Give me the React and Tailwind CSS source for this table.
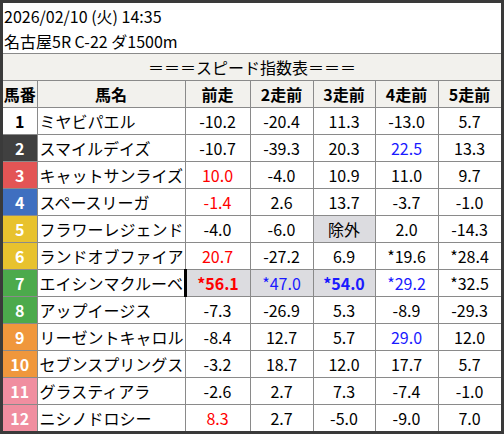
import React from 'react';

const FRAME = {
  1: 'bg-white text-black',
  2: 'bg-[#404040] text-white',
  3: 'bg-[#e35555] text-white',
  4: 'bg-[#3f6fc0] text-white',
  5: 'bg-[#e8c22e] text-white',
  6: 'bg-[#e8c22e] text-white',
  7: 'bg-[#4caa4c] text-white',
  8: 'bg-[#4caa4c] text-white',
  9: 'bg-[#f0973c] text-white',
  10: 'bg-[#f0973c] text-white',
  11: 'bg-[#f08ea0] text-white',
  12: 'bg-[#f08ea0] text-white',
};

// value cells: [text, style] where style: r = red, b = blue, B = bold, g = gray bg, k = black left bar
const ROWS = [
  ['ミヤビパエル', ['-10.2'], ['-20.4'], ['11.3'], ['-13.0'], ['5.7']],
  ['スマイルデイズ', ['-10.7'], ['-39.3'], ['20.3'], ['22.5', 'b'], ['13.3']],
  ['キャットサンライズ', ['10.0', 'r'], ['-4.0'], ['10.9'], ['11.0'], ['9.7']],
  ['スペースリーガ', ['-1.4', 'r'], ['2.6'], ['13.7'], ['-3.7'], ['-1.0']],
  ['フラワーレジェンド', ['-4.0'], ['-6.0'], ['除外', 'g'], ['2.0'], ['-14.3']],
  ['ランドオブファイア', ['20.7', 'r'], ['-27.2'], ['6.9'], ['*19.6'], ['*28.4']],
  ['エイシンマクルーベ', ['*56.1', 'rBgk'], ['*47.0', 'bg'], ['*54.0', 'bBg'], ['*29.2', 'b'], ['*32.5']],
  ['アップイージス', ['-7.3'], ['-26.9'], ['5.3'], ['-8.9'], ['-29.3']],
  ['リーゼントキャロル', ['-8.4'], ['12.7'], ['5.7'], ['29.0', 'b'], ['12.0']],
  ['セブンスプリングス', ['-3.2'], ['18.7'], ['12.0'], ['17.7'], ['5.7']],
  ['グラスティアラ', ['-2.6'], ['2.7'], ['7.3'], ['-7.4'], ['-1.0']],
  ['ニシノドロシー', ['8.3', 'r'], ['2.7'], ['-5.0'], ['-9.0'], ['7.0']],
];

const HEAD = ['前走', '2走前', '3走前', '4走前', '5走前'];

function cellClass(s = '') {
  let c = 'border border-[#8a8a8a] text-center p-0 ';
  if (s.includes('r')) c += 'text-[#ff0000] ';
  else if (s.includes('b')) c += 'text-[#1a1aff] ';
  else c += 'text-black ';
  if (s.includes('B')) c += 'font-bold ';
  if (s.includes('g')) c += 'bg-[#dcdce0] ';
  if (s.includes('k')) c += 'border-l-[3px] border-l-black ';
  return c;
}

export default function App() {
  return (
    <div
      className="w-[504px] h-[434px] border-[3px] border-[#3a3a3a] bg-white overflow-hidden"
      style={{ fontFamily: '"Noto Sans CJK JP", "Noto Sans", sans-serif' }}
    >
      <div className="h-[50px] px-[1px] pt-[1px] text-[16px] leading-[25px] text-black">
        <div>2026/02/10 (火) 14:35</div>
        <div>名古屋5R C-22 ダ1500m</div>
      </div>
      <table className="w-[498px] border-collapse table-fixed text-[16px] leading-[20px]">
        <colgroup>
          <col className="w-[34px]" />
          <col className="w-[148px]" />
          <col className="w-[65px]" />
          <col className="w-[63px]" />
          <col className="w-[62px]" />
          <col className="w-[63px]" />
          <col className="w-[63px]" />
        </colgroup>
        <tbody>
          <tr className="h-[27px] bg-[#f2f1ed]">
            <td colSpan={7} className="border-y border-[#8a8a8a] text-center p-0">
              ＝＝＝スピード指数表＝＝＝
            </td>
          </tr>
          <tr className="h-[27px] bg-[#f2f1ed] font-bold">
            <td className="border border-l-0 border-[#8a8a8a] text-center p-0">馬番</td>
            <td className="border border-[#8a8a8a] text-center p-0">馬名</td>
            {HEAD.map((h) => (
              <td key={h} className="border border-[#8a8a8a] text-center p-0">{h}</td>
            ))}
          </tr>
          {ROWS.map(([name, ...vals], i) => {
            const n = i + 1;
            return (
              <tr key={n} className="h-[27px]">
                <td className={`border border-l-0 border-[#8a8a8a] text-center p-0 font-bold ${FRAME[n]}`}>{n}</td>
                <td className="border border-[#8a8a8a] px-[2px] py-0 whitespace-nowrap overflow-hidden">{name}</td>
                {vals.map(([v, s], j) => (
                  <td key={j} className={cellClass(s)}>{v}</td>
                ))}
              </tr>
            );
          })}
        </tbody>
      </table>
    </div>
  );
}
